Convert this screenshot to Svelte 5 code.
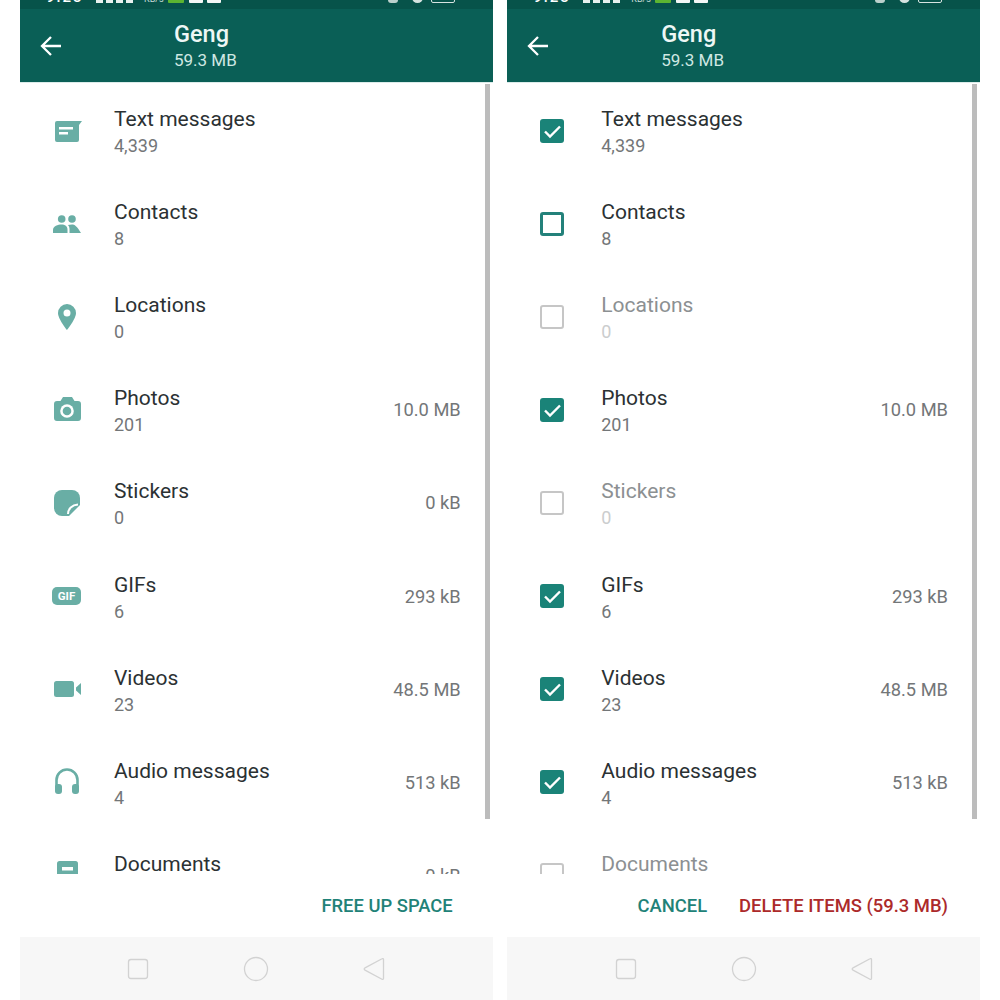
<script>
  const rows = [
    { id: 'text', title: 'Text messages', count: '4,339', size: '', checked: true },
    { id: 'contacts', title: 'Contacts', count: '8', size: '', checked: false },
    { id: 'locations', title: 'Locations', count: '0', size: '', checked: false, off: true },
    { id: 'photos', title: 'Photos', count: '201', size: '10.0 MB', checked: true },
    { id: 'stickers', title: 'Stickers', count: '0', size: '0 kB', checked: false, off: true },
    { id: 'gifs', title: 'GIFs', count: '6', size: '293 kB', checked: true },
    { id: 'videos', title: 'Videos', count: '23', size: '48.5 MB', checked: true },
    { id: 'audio', title: 'Audio messages', count: '4', size: '513 kB', checked: true },
    { id: 'documents', title: 'Documents', count: '0', size: '0 kB', checked: false, off: true }
  ];
</script>

{#snippet icon(id)}
  <svg class="icon" viewBox="0 0 32 32" width="32" height="32">
    {#if id === 'text'}
      <path d="M6 6h25l-3 4v15a2 2 0 0 1-2 2H6a2 2 0 0 1-2-2V8a2 2 0 0 1 2-2z" />
      <rect class="cut" x="8" y="12" width="14" height="2.5" />
      <rect class="cut" x="8" y="17" width="9" height="2.5" />
    {:else if id === 'contacts'}
      <circle cx="10.7" cy="11" r="3.8" />
      <circle cx="21" cy="11" r="3.8" />
      <path d="M2 25v-3c0-4 5-5.500 8.500-5.500s6 1.500 6 5.500v3z" />
      <path d="M18.500 25v-4c0-1.500-.6-3-1.600-4 1.200-.4 2.700-.6 4.100-.6 2.500 0 5 1.500 9 8.600z" />
    {:else if id === 'locations'}
      <path fill-rule="evenodd" d="M16 3a9 9 0 0 1 9 9c0 6-9 17-9 17S7 18 7 12a9 9 0 0 1 9-9zm0 5.500a3.500 3.500 0 1 0 0 7 3.500 3.500 0 0 0 0-7z" />
    {:else if id === 'photos'}
      <path d="M12 3h9l2.500 4H27a3 3 0 0 1 3 3v14a3 3 0 0 1-3 3H6a3 3 0 0 1-3-3V10a3 3 0 0 1 3-3h3.500z" />
      <circle class="cut" cx="16" cy="17" r="6.800" />
      <circle cx="16" cy="17" r="4.300" />
    {:else if id === 'stickers'}
      <path d="M11 3h10a8 8 0 0 1 8 8v7L18 29h-7a8 8 0 0 1-8-8V11a8 8 0 0 1 8-8z" />
      <path class="fold" d="M17 27c0-5 4-9 10-9.500" />
    {:else if id === 'gifs'}
      <rect x="1" y="7" width="29" height="18" rx="5" />
      <text class="gif" x="15.500" y="20.200" text-anchor="middle">GIF</text>
    {:else if id === 'videos'}
      <rect x="3" y="8" width="20" height="16" rx="2.500" />
      <path d="M25 14.500l5-4.500v12l-5-4.500z" />
    {:else if id === 'audio'}
      <path class="band" d="M5.500 22v-8a10.500 10.500 0 0 1 21 0v8" />
      <rect x="4" y="18" width="7" height="10" rx="3" />
      <rect x="21" y="18" width="7" height="10" rx="3" />
    {:else}
      <rect x="6" y="2" width="21" height="28" rx="2.500" />
      <rect class="cut" x="11" y="8" width="11" height="3.500" />
    {/if}
  </svg>
{/snippet}

{#snippet checkbox(row)}
  <span class="box-wrap">
    <span class="box" class:checked={row.checked} class:off={row.off}>
      {#if row.checked}
        <svg viewBox="0 0 24 24" width="24" height="24">
          <path d="M5 12.500l5 5L20 7.500" fill="none" stroke="#fff" stroke-width="2.400" />
        </svg>
      {/if}
    </span>
  </span>
{/snippet}

{#snippet panel(selecting)}
  <section class="panel">
    <div class="status">
      <span class="clock">9:23</span>
      <span class="bars"><i></i><i></i><i></i><i></i></span>
      <span class="speed">KB/s</span>
      <span class="chip green"></span>
      <span class="chip"></span>
      <span class="chip"></span>
      <span class="status-right">
        <span class="bell"></span>
        <span class="dot"></span>
        <span class="battery"></span>
      </span>
    </div>

    <header class="appbar">
      <svg class="back" viewBox="0 0 24 24" width="24" height="24">
        <path d="M22 12H3M12 3l-9 9 9 9" fill="none" stroke="#fff" stroke-width="2.300" />
      </svg>
      <div class="heading">
        <div class="name">Geng</div>
        <div class="total">59.3 MB</div>
      </div>
    </header>

    <div class="list">
      {#each rows as row (row.id)}
        <div class="row" class:off={selecting && row.off}>
          {#if selecting}
            {@render checkbox(row)}
          {:else}
            {@render icon(row.id)}
          {/if}
          <div class="labels">
            <div class="title">{row.title}</div>
            <div class="count">{row.count}</div>
          </div>
          {#if row.size && !(selecting && row.off)}
            <div class="size">{row.size}</div>
          {/if}
        </div>
      {/each}
      <div class="thumb"></div>
    </div>

    <footer class="actions">
      {#if selecting}
        <span class="action cancel">CANCEL</span>
        <span class="action delete">DELETE ITEMS (59.3 MB)</span>
      {:else}
        <span class="action free">FREE UP SPACE</span>
      {/if}
    </footer>

    <nav class="nav">
      <svg viewBox="0 0 32 32" width="32" height="32"><rect x="6.500" y="6.500" width="19" height="19" rx="2.500" /></svg>
      <svg viewBox="0 0 32 32" width="32" height="32"><circle cx="16" cy="16" r="11.500" /></svg>
      <svg viewBox="0 0 32 32" width="32" height="32"><path d="M25.500 6.500v19a1 1 0 0 1-1.500.8L7 17.200a1.300 1.300 0 0 1 0-2.400L24 5.700a1 1 0 0 1 1.500.8z" /></svg>
    </nav>
  </section>
{/snippet}

<main class="page">
  {@render panel(false)}
  {@render panel(true)}
</main>

<style>
  :global(body) {
    margin: 0;
    background: #fff;
    overflow: hidden;
  }

  .page {
    display: flex;
    gap: 14.5px;
    height: 1000px;
    padding: 0 20px;
    box-sizing: border-box;
    font-family: Roboto, "Liberation Sans", sans-serif;
  }

  .panel {
    width: 472.75px;
    display: flex;
    flex-direction: column;
    height: 1000px;
  }

  .status {
    height: 9px;
    flex: none;
    box-sizing: border-box;
    padding: 0 26px 6px;
    background: #07534a;
    display: flex;
    align-items: flex-end;
    overflow: hidden;
    color: #fff;
  }

  .clock {
    width: 50px;
    font-size: 15px;
    line-height: 11px;
    font-weight: 500;
    letter-spacing: 2px;
  }

  .bars {
    display: flex;
    gap: 3px;
    width: 48px;
  }

  .bars i {
    width: 7px;
    height: 10px;
    background: #e8f1ef;
  }

  .speed {
    width: 24px;
    font-size: 9px;
    line-height: 7px;
    color: #c9dcd8;
  }

  .chip {
    width: 14px;
    height: 12px;
    margin-right: 4px;
    background: #f4f7f6;
    border-radius: 1px;
  }

  .chip.green {
    width: 16px;
    margin-right: 5px;
    background: #5cb531;
  }

  .status-right {
    margin-left: auto;
    margin-right: 12px;
    display: flex;
    align-items: flex-end;
    gap: 14px;
  }

  .bell {
    width: 10px;
    height: 10px;
    border-radius: 0 0 3px 3px;
    background: #bcd0cc;
  }

  .dot {
    width: 11px;
    height: 11px;
    border-radius: 50%;
    background: #d6e3e0;
  }

  .battery {
    width: 22px;
    height: 10px;
    margin-left: -6px;
    border: 1px solid #d6e3e0;
    border-radius: 2px;
  }

  .appbar {
    height: 74px;
    flex: none;
    box-sizing: border-box;
    display: flex;
    align-items: center;
    padding-left: 19px;
    background: #0a5f56;
    border-bottom: 1px solid #dcecea;
    color: #fff;
  }

  .back {
    flex: none;
  }

  .heading {
    margin-left: 111px;
    padding-top: 1px;
  }

  .name {
    font-size: 23.500px;
    line-height: 29px;
    font-weight: 500;
    color: #eef7f5;
  }

  .total {
    font-size: 17px;
    line-height: 23px;
    color: #cfe8e3;
  }

  .list {
    flex: 1;
    min-height: 0;
    overflow: hidden;
    position: relative;
    padding-top: 1px;
  }

  .row {
    height: 93.1px;
    display: flex;
    align-items: center;
    box-sizing: border-box;
    padding: 0 32px 0 31px;
  }

  .icon {
    flex: none;
    fill: #69aea5;
  }

  .icon .cut {
    fill: #fff;
  }

  .icon .fold {
    fill: none;
    stroke: #fff;
    stroke-width: 2;
  }

  .icon .band {
    fill: none;
    stroke: #69aea5;
    stroke-width: 2.600;
  }

  .icon .gif {
    fill: #fff;
    font-size: 11.500px;
    font-weight: 700;
    font-family: Roboto, sans-serif;
  }

  .box-wrap {
    width: 32px;
    height: 32px;
    flex: none;
    display: flex;
    align-items: center;
    padding-left: 1.500px;
    box-sizing: border-box;
  }

  .box {
    width: 24px;
    height: 24px;
    box-sizing: border-box;
    border: 3px solid #23817a;
    border-radius: 3px;
  }

  .box.off {
    border: 2.500px solid #c6c6c6;
  }

  .box.checked {
    border: none;
    background: #1a8378;
  }

  .box svg {
    display: block;
  }

  .labels {
    margin-left: 31px;
    padding-top: 3px;
    flex: 1;
  }

  .title {
    font-size: 21px;
    line-height: 26px;
    color: #2b3133;
  }

  .count {
    font-size: 18px;
    line-height: 26px;
    margin-top: 1px;
    margin-bottom: -1px;
    color: #737678;
  }

  .size {
    font-size: 18.300px;
    color: #737678;
  }

  .row.off .title {
    color: #8c9092;
  }

  .row.off .count {
    color: #cbcdce;
  }

  .thumb {
    position: absolute;
    top: 1px;
    right: 3px;
    width: 5px;
    height: 735px;
    background: #bcbcbc;
  }

  .actions {
    height: 63px;
    flex: none;
    display: flex;
    justify-content: flex-end;
    align-items: center;
    gap: 32px;
    padding: 0 32px 0 0;
    font-size: 18.400px;
    font-weight: 500;
  }

  .free {
    margin-right: 8px;
  }

  .free,
  .cancel {
    color: #1f8278;
  }

  .delete {
    color: #ac2a2a;
  }

  .nav {
    height: 63px;
    flex: none;
    background: #f7f7f7;
    display: flex;
    justify-content: center;
    align-items: center;
    gap: 86px;
  }

  .nav svg {
    fill: none;
    stroke: #d2d2d2;
    stroke-width: 1.300;
  }
</style>
